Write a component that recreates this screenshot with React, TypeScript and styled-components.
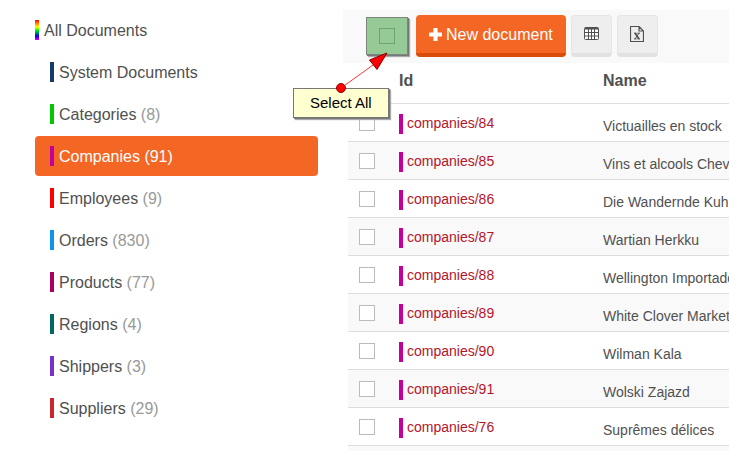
import React from "react";
import styled, { createGlobalStyle } from "styled-components";

const GlobalStyle = createGlobalStyle`
  *, *::before, *::after { box-sizing: border-box; }
  body {
    margin: 0;
    overflow: hidden;
    background: #fff;
    color: #505050;
    font: 16px/20px "Liberation Sans", Arial, sans-serif;
  }
`;

const Page = styled.div`
  display: grid;
  grid-template-columns: minmax(0, 283fr) minmax(0, 386fr);
  column-gap: 25px;
  height: 100vh;
  padding: 10px 0 0 35px;
  overflow: hidden;
`;

const Collections = styled.nav`
  display: flex;
  flex-direction: column;
  gap: 2px;
`;

const CollectionLink = styled.a<{ $root?: boolean; $active?: boolean }>`
  display: flex;
  align-items: center;
  gap: 5px;
  height: 40px;
  padding-left: ${(p) => (p.$root ? 0 : 15)}px;
  border-radius: 4px;
  background: ${(p) => (p.$active ? "#f46624" : "transparent")};
  color: ${(p) => (p.$active ? "#fff" : "#505050")};
  text-decoration: none;
  white-space: nowrap;
`;

const Label = styled.span`
  padding-top: 2px;
`;

const Count = styled.span<{ $active?: boolean }>`
  color: ${(p) => (p.$active ? "#fff" : "#999")};
`;

const Swatch = styled.span<{ $fill: string }>`
  flex: none;
  width: 4px;
  height: 20px;
  background: ${(p) => p.$fill};
`;

const Content = styled.main`
  position: relative;
  min-width: 0;
`;

const Toolbar = styled.div`
  display: flex;
  gap: 5px;
  height: 53px;
  padding: 5px 0 6px 23px;
  background: #f9f9f9;
`;

const SelectAll = styled.label`
  position: relative;
  display: flex;
  align-items: center;
  width: 45px;
  height: 42px;
  padding-left: 13px;
`;

const Highlight = styled.span`
  position: absolute;
  left: 0;
  top: 2px;
  width: 42px;
  height: 38px;
  border: 1px solid #7d867d;
  background: rgba(49, 155, 53, 0.5);
  box-shadow: 1px 1px 0 #777, 2px 2px 1px #aaa;
  pointer-events: none;
`;

const Checkbox = styled.input`
  appearance: none;
  display: block;
  width: 16px;
  height: 16px;
  margin: 0;
  border: 1px solid #bbb;
  background: #fff;
`;

const ToolbarCheckbox = styled(Checkbox)`
  border-color: #aaa;
  background: transparent;
`;

const Button = styled.button<{ $primary?: boolean }>`
  display: flex;
  align-items: center;
  justify-content: center;
  gap: 4px;
  flex: none;
  height: 42px;
  min-width: 41px;
  padding: ${(p) => (p.$primary ? "0 13px" : "0 0 2px")};
  border: ${(p) => (p.$primary ? "0" : "1px solid #e5e5e5")};
  border-bottom: 4px solid ${(p) => (p.$primary ? "#d94c0a" : "#e2e2e2")};
  border-radius: 4px;
  background: ${(p) => (p.$primary ? "#f46624" : "#eee")};
  color: ${(p) => (p.$primary ? "#fff" : "#505050")};
  font: inherit;
  white-space: nowrap;
`;

const TableFrame = styled.div`
  padding-left: 5px;
`;

const Table = styled.table`
  width: 100%;
  table-layout: fixed;
  border-collapse: separate;
  border-spacing: 0;
  text-align: left;
`;

const CheckColumn = styled.col`
  width: 51px;
`;

const IdColumn = styled.col`
  width: 204px;
`;

const HeadCell = styled.th`
  height: 41px;
  padding: 0 0 4px;
  border-bottom: 1px solid #ddd;
`;

const Row = styled.tr`
  &:nth-child(even) { background: #f9f9f9; }
`;

const Cell = styled.td`
  height: 38px;
  padding: 0;
  border-bottom: 1px solid #ddd;
  font-size: 14px;
  white-space: nowrap;
`;

const CheckCell = styled(Cell)`
  padding-left: 11px;
`;

const NameCell = styled(Cell)`
  padding-top: 6px;
`;

const DocumentLink = styled.a`
  display: flex;
  gap: 4px;
  margin-top: 2px;
  color: #b5152b;
  line-height: 18px;
  text-decoration: none;
`;

const Arrow = styled.svg`
  position: absolute;
  left: -10px;
  top: 40px;
  z-index: 2;
  pointer-events: none;
`;

const Callout = styled.div`
  position: absolute;
  left: -50px;
  top: 78px;
  z-index: 1;
  padding: 5px 16px;
  height: 30px;
  border: 1px solid #777;
  background: #ffffd2;
  box-shadow: 1px 1px 0 #777, 2px 2px 1px #aaa;
  color: #000;
  font-size: 15px;
  line-height: 18px;
  text-align: center;
  white-space: nowrap;
`;

const collections = [
  { name: "System Documents", fill: "#153b68" },
  { name: "Categories", count: 8, fill: "#00c700" },
  { name: "Companies", count: 91, fill: "#c4009b", active: true },
  { name: "Employees", count: 9, fill: "#ff0000" },
  { name: "Orders", count: 830, fill: "#0d96ec" },
  { name: "Products", count: 77, fill: "#ab0061" },
  { name: "Regions", count: 4, fill: "#00695f" },
  { name: "Shippers", count: 3, fill: "#7a31cb" },
  { name: "Suppliers", count: 29, fill: "#c9282b" },
];

const companies = [
  ["companies/84", "Victuailles en stock"],
  ["companies/85", "Vins et alcools Chevalier"],
  ["companies/86", "Die Wandernde Kuh"],
  ["companies/87", "Wartian Herkku"],
  ["companies/88", "Wellington Importadora"],
  ["companies/89", "White Clover Markets"],
  ["companies/90", "Wilman Kala"],
  ["companies/91", "Wolski Zajazd"],
  ["companies/76", "Suprêmes délices"],
];

const rainbow =
  "linear-gradient(#ff0000, #ff9900 20%, #ffff00 35%, #00ff00 50%, #008866 65%, #0000ee 80%, #dd00ff)";

const PlusIcon = () => (
  <svg width="13" height="13" viewBox="0 0 13 13" aria-hidden="true">
    <path
      fill="currentColor"
      d="M5 0h3q.6 0 .6.6v3.8h3.8q.6 0 .6.6v3q0 .6-.6.6H8.600v3.800q0 .6-.6.6H5q-.6 0-.6-.6V8.600H.6Q0 8.600 0 8V5q0-.6.6-.6h3.800V.6Q4.400 0 5 0z"
    />
  </svg>
);

const TableIcon = () => (
  <svg width="15" height="13" viewBox="0 0 15 13" aria-hidden="true">
    <rect x=".5" y=".5" width="14" height="12" rx="1" fill="#fff" stroke="currentColor" />
    <path d="M1 1.500h13" stroke="currentColor" strokeWidth="2" />
    <path d="M1 5.500h13M1 9h13M4.500 2v10M10.500 2v10M7.500 2v10" stroke="currentColor" />
  </svg>
);

const SpreadsheetIcon = () => (
  <svg width="14" height="16" viewBox="0 0 14 16" fill="none" stroke="currentColor" aria-hidden="true">
    <path d="M1 .5h8L13.500 5v10.500H.5V1q0-.5.5-.5zM9 .5V5h4.500" strokeWidth="1.200" />
    <path d="M5 7l4 6" strokeWidth="1.700" />
    <path d="M9 7l-4 6M4 7.200h2.500M7.500 7.200h2.500M4 12.900h2.500M7.500 12.900h2.500" />
  </svg>
);

export default function App() {
  return (
    <>
      <GlobalStyle />
      <Page>
        <Collections aria-label="Collections">
          <CollectionLink href="#all" $root>
            <Swatch $fill={rainbow} />
            <Label>All Documents</Label>
          </CollectionLink>
          {collections.map(({ name, count, fill, active }) => (
            <CollectionLink
              key={name}
              href={`#${name}`}
              $active={active}
              aria-current={active ? "page" : undefined}
            >
              <Swatch $fill={fill} />
              <Label>
                {name}
                {count !== undefined && <Count $active={active}> ({count})</Count>}
              </Label>
            </CollectionLink>
          ))}
        </Collections>

        <Content>
          <Toolbar>
            <SelectAll>
              <ToolbarCheckbox type="checkbox" aria-label="Select All" />
              <Highlight />
            </SelectAll>
            <Button type="button" $primary>
              <PlusIcon />
              <Label>New document</Label>
            </Button>
            <Button type="button" aria-label="Choose columns">
              <TableIcon />
            </Button>
            <Button type="button" aria-label="Export to spreadsheet">
              <SpreadsheetIcon />
            </Button>
          </Toolbar>

          <TableFrame>
            <Table>
              <colgroup>
                <CheckColumn />
                <IdColumn />
                <col />
              </colgroup>
              <thead>
                <tr>
                  <HeadCell />
                  <HeadCell scope="col">Id</HeadCell>
                  <HeadCell scope="col">Name</HeadCell>
                </tr>
              </thead>
              <tbody>
                {companies.map(([id, name]) => (
                  <Row key={id}>
                    <CheckCell>
                      <Checkbox type="checkbox" aria-label={id} />
                    </CheckCell>
                    <Cell>
                      <DocumentLink href={`#${id}`}>
                        <Swatch $fill="#c4009b" />
                        {id}
                      </DocumentLink>
                    </Cell>
                    <NameCell>{name}</NameCell>
                  </Row>
                ))}
                <Row aria-hidden="true">
                  <Cell colSpan={3} />
                </Row>
              </tbody>
            </Table>
          </TableFrame>

          <Callout role="tooltip">Select All</Callout>
          <Arrow width="60" height="50" viewBox="0 0 60 50" aria-hidden="true">
            <path d="M8 38L40 15" stroke="#f33" />
            <path d="M54 3L36.500 10L44 19.500z" fill="#f00" stroke="#800" />
            <circle cx="8" cy="38" r="4.500" fill="#f00" stroke="#900" />
          </Arrow>
        </Content>
      </Page>
    </>
  );
}
